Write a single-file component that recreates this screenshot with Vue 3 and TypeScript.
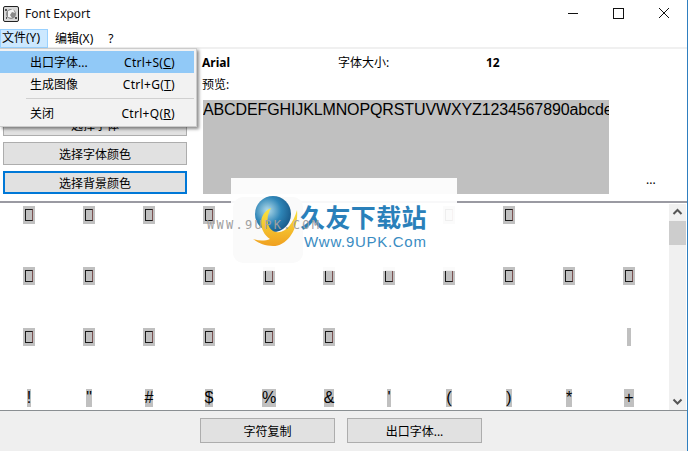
<script setup lang="ts">
type Cell = { kind: 'box' | 'none' | 'thin' | 'char'; ch?: string }
const b: Cell = { kind: 'box' }
const n: Cell = { kind: 'none' }
const t = (ch: string): Cell => ({ kind: 'char', ch })
const rows: Cell[][] = [
  [b, b, b, b, n, n, n, b, b, n, n],
  [b, b, n, b, b, b, b, b, b, b, b],
  [b, b, b, b, b, b, n, n, n, n, { kind: 'thin' }],
  [t('!'), t('"'), t('#'), t('$'), t('%'), t('&'), t("'"), t('('), t(')'), t('*'), t('+')],
]
const cells = rows.flat()
</script>

<template>
  <div class="win">
    <header class="title">
      <svg class="appicon" width="16" height="16" viewBox="0 0 16 16">
        <rect x="0.5" y="0.5" width="15" height="15" rx="1.5" fill="#d8d8d8" stroke="#222" />
        <circle cx="8" cy="8" r="5" fill="#8a8a8a" />
        <path d="M5 5 L10 3 L12 7 L9 6 L7 9 L9 12 L5 11 Z" fill="#f4f4f4" />
        <path d="M2 3h2v2H2zM12 11h2v2h-2zM3 11h1v2H3z" fill="#555" />
      </svg>
      <span class="title-text">Font Export</span>
      <div class="controls">
        <svg width="119" height="30" viewBox="0 0 119 30">
          <path d="M0 13.5H10" stroke="#111" fill="none" />
          <rect x="45.5" y="8.5" width="10" height="10" stroke="#111" fill="none" />
          <path d="M91 8L101 18M101 8L91 18" stroke="#111" fill="none" />
        </svg>
      </div>
    </header>

    <nav class="menubar">
      <span class="mi active">文件(Y)</span>
      <span class="mi">编辑(X)</span>
      <span class="mi">?</span>
    </nav>

    <section class="top">
      <div class="actions">
        <button class="btn">选择字体</button>
        <button class="btn">选择字体颜色</button>
        <button class="btn focus">选择背景颜色</button>
      </div>
      <div class="info">
        <div class="line1">
          <b class="fname">Arial</b>
          <span class="fsize">字体大小:</span>
          <b>12</b>
        </div>
        <div class="line2">预览:</div>
        <div class="preview-row">
          <div class="preview">ABCDEFGHIJKLMNOPQRSTUVWXYZ1234567890abcdefghijklmnopqrstuvwxyz</div>
          <span class="more">...</span>
        </div>
      </div>
    </section>

    <section class="mid">
      <div class="grid">
        <div v-for="(c, i) in cells" :key="i" class="cell">
          <span v-if="c.kind === 'box'" class="g box"><i></i></span>
          <span v-else-if="c.kind === 'thin'" class="g thin"></span>
          <span v-else-if="c.kind === 'char'" class="g">{{ c.ch }}</span>
        </div>
      </div>
      <aside class="sb">
        <svg class="arrow" width="17" height="17" viewBox="0 0 17 17"><path d="M4.5 10L8.5 6L12.5 10" fill="none" stroke="#555" stroke-width="2" /></svg>
        <div class="thumb"></div>
        <div class="track"></div>
        <svg class="arrow" width="17" height="17" viewBox="0 0 17 17"><path d="M4.5 6.5L8.5 10.5L12.5 6.5" fill="none" stroke="#555" stroke-width="2" /></svg>
      </aside>
    </section>

    <footer class="bottom">
      <button class="btn wide">字符复制</button>
      <button class="btn wide">出口字体...</button>
    </footer>

    <div class="menu">
      <div class="row hot"><span>出口字体...</span><span class="sc">Ctrl+S(<u>C</u>)</span></div>
      <div class="row"><span>生成图像</span><span class="sc">Ctrl+G(<u>T</u>)</span></div>
      <div class="sep"></div>
      <div class="row"><span>关闭</span><span class="sc">Ctrl+Q(<u>R</u>)</span></div>
    </div>

    <div class="wm">
      <div class="wm-faint"></div>
      <svg class="wm-logo" width="50" height="56" viewBox="0 0 50 56">
        <defs>
          <radialGradient id="ball" cx="0.35" cy="0.4" r="0.75">
            <stop offset="0" stop-color="#b4dcea" />
            <stop offset="0.5" stop-color="#2f86b8" />
            <stop offset="1" stop-color="#14507f" />
          </radialGradient>
          <linearGradient id="moon" x1="0" y1="0" x2="0" y2="1">
            <stop offset="0" stop-color="#f9e63e" />
            <stop offset="1" stop-color="#f0a020" />
          </linearGradient>
        </defs>
        <circle cx="22" cy="20" r="18" fill="url(#ball)" />
        <path d="M46 16C48 35 36 52 22 52C14 52 7 49 2 45C8 47 14 47 19 45C8 38 6 20 20 14C14 24 16 36 25 38C34 40 42 30 46 16Z" fill="url(#moon)" />
      </svg>
      <div class="wm-text">
        <div class="wm-cn">久友下载站</div>
        <div class="wm-en">Www.9UPK.Com</div>
      </div>
      <div class="wm-gray">WWW.9UPK.COM</div>
    </div>
  </div>
</template>

<style scoped>
.win {
  position: relative;
  width: 688px;
  height: 451px;
  box-sizing: border-box;
  border-right: 1px solid #2f7fc0;
  overflow: hidden;
  display: flex;
  flex-direction: column;
  background: #fff;
  color: #000;
  font: 12px "Noto Sans", "Noto Sans CJK SC", sans-serif;
}
.title {
  height: 30px;
  flex: none;
  display: flex;
  align-items: center;
  padding-left: 3px;
}
.appicon { flex: none; margin-top: -2px; }
.title-text { margin-left: 6px; margin-top: -3px; color: #111; }
.controls { margin-left: auto; height: 30px; }
.controls svg { display: block; }

.menubar {
  height: 17px;
  flex: none;
  display: flex;
  line-height: 18px;
  border-bottom: 2px solid #f0f0f0;
}
.mi { padding: 0 6px 0 2px; margin-right: 5px; }
.mi.active {
  width: 40px;
  background: #cce8ff;
  box-shadow: inset 0 0 0 1px #99d1ff;
  margin-top: -1px;
  height: 19px;
  margin-right: 5px;
  white-space: nowrap;
}
.mi:nth-child(3) { margin-left: 2px; }

.top {
  height: 152px;
  flex: none;
  display: flex;
  box-sizing: border-box;
}
.actions {
  width: 184px;
  margin-left: 3px;
  flex: none;
  display: flex;
  flex-direction: column;
  justify-content: flex-end;
  gap: 6px;
  padding-bottom: 7px;
  box-sizing: border-box;
}
.btn {
  height: 23px;
  padding: 0;
  box-sizing: border-box;
  background: #e1e1e1;
  border: 1px solid #adadad;
  font: inherit;
  color: #000;
}
.btn.focus { border: 2px solid #0078d7; }
.info { margin-left: 15px; flex: 1; min-width: 0; padding-top: 5px; }
.line1 { display: flex; height: 17px; line-height: 17px; }
.fname { width: 136px; }
.fsize { width: 148px; }
.line2 { margin-top: 5px; height: 17px; line-height: 17px; }
.preview-row { display: flex; margin-top: 7px; margin-left: 1px; }
.preview {
  width: 406px;
  height: 94px;
  background: #c0c0c0;
  font: 16px/20px "Liberation Sans", sans-serif;
  letter-spacing: -0.12px;
  white-space: nowrap;
  overflow: hidden;
}
.more { margin-left: 37px; align-self: flex-end; line-height: 20px; padding-bottom: 4px; }

.mid {
  flex: 1;
  min-height: 0;
  display: flex;
  border-top: 2px solid #9a9aa2;
  border-bottom: 1px solid #8a8f92;
}
.grid {
  flex: 1;
  display: grid;
  grid-template-columns: repeat(11, 58px);
  grid-auto-rows: 18px;
  column-gap: 2px;
  row-gap: 43px;
  padding-top: 3px;
  align-content: start;
  overflow: hidden;
}
.cell { display: flex; justify-content: center; }
.g {
  display: block;
  height: 18px;
  background: #c0c0c0;
  font: 16px/18px "Liberation Sans", sans-serif;
}
.box { width: 12px; padding: 3px 2px; box-sizing: border-box; }
.box i {
  display: block;
  height: 12px;
  box-sizing: border-box;
  border: 1px solid #1a1a1a;
  border-right-color: #7a5050;
}
.thin { width: 4px; }
.sb {
  width: 17px;
  flex: none;
  background: #f0f0f0;
  margin-top: 1px;
  margin-right: 1px;
  display: flex;
  flex-direction: column;
}
.arrow { display: block; flex: none; }
.thumb { height: 24px; background: #cdcdcd; flex: none; }
.track { flex: 1; }

.bottom {
  height: 40px;
  flex: none;
  background: #efefef;
  display: flex;
  gap: 12px;
  padding: 7px 0 0 200px;
  box-sizing: border-box;
}
.btn.wide { width: 135px; height: 25px; }

.menu {
  position: absolute;
  left: 0;
  top: 48px;
  width: 197px;
  height: 79px;
  box-sizing: border-box;
  background: #f2f2f2;
  border: 1px solid #ccc;
  border-left: 0;
  padding-top: 2px;
  box-shadow: 2px 2px 3px rgba(0, 0, 0, 0.45);
}
.row {
  width: 194px;
  height: 22px;
  display: flex;
  justify-content: space-between;
  align-items: center;
  box-sizing: border-box;
  padding: 0 19px 0 30px;
}
.row.hot { background: #91c9f7; }
.sc { letter-spacing: 0.3px; }
.sep { height: 1px; background: #d0d0d0; margin: 3px 2px 3px 26px; }

.wm {
  position: absolute;
  left: 231px;
  top: 178px;
  width: 226px;
  height: 93px;
  background: rgba(255, 255, 255, 0.93);
}
.wm-faint {
  position: absolute;
  left: 2px;
  top: 19px;
  width: 70px;
  height: 66px;
  border-radius: 10px;
  background: #fafafa;
}
.wm-logo { position: absolute; left: 20px; top: 16px; }
.wm-text { position: absolute; left: 69px; top: 22px; white-space: nowrap; }
.wm-cn {
  font: 700 25px/32px "Noto Sans CJK SC", sans-serif;
  color: #2a80ba;
  letter-spacing: 0.4px;
}
.wm-en {
  font: 15px/20px "Liberation Sans", sans-serif;
  color: #3a8cc2;
  letter-spacing: 0.7px;
  margin-left: 4px;
}
.wm-gray {
  position: absolute;
  left: -24px;
  top: 40px;
  font: 12px/14px "DejaVu Sans Mono", monospace;
  color: #a0a0a0;
  letter-spacing: 2.3px;
  white-space: nowrap;
}
</style>
